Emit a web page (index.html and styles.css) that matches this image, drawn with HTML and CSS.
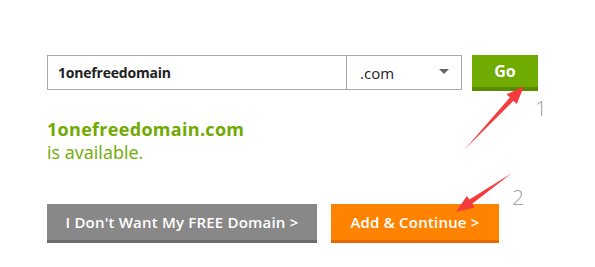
FILE: index.html
```html
<!DOCTYPE html>
<html>
<head>
<meta charset="utf-8">
<link rel="stylesheet" href="styles.css">
</head>
<body>
<div class="page">
  <div class="search-row">
    <div class="field">
      <div class="name-input">1onefreedomain</div>
      <div class="tld-select"><span>.com</span><span class="caret"></span></div>
    </div>
    <div class="go-btn">Go</div>
  </div>
  <div class="result">
    <div class="domain">1onefreedomain.com</div>
    <div class="status">is available.</div>
  </div>
  <div class="actions">
    <div class="btn btn-gray">I Don't Want My FREE Domain &gt;</div>
    <div class="btn btn-orange">Add &amp; Continue &gt;</div>
  </div>
  <svg class="annot" width="595" height="267" viewBox="0 0 595 267">
    <polygon points="465,149 513.5,100.8 516.8,103.9 524,86 506.6,94.3 509.9,97.4" fill="#f53b3b"/>
    <polygon points="512,173 472.2,203.8 474.8,207.4 456,212 466.8,196 469.4,199.6" fill="#f53b3b"/>
  </svg>
  <div class="num num1">1</div>
  <div class="num num2">2</div>
</div>
</body>
</html>
```
FILE: styles.css
```css
html, body { margin: 0; padding: 0; background: #fff; }
body { font-family: "Open Sans", "Noto Sans", sans-serif; width: 595px; height: 267px; overflow: hidden; }
.page { position: relative; padding: 55px 0 0 47px; height: 267px; box-sizing: border-box; }
.search-row { display: flex; gap: 10px; height: 36px; }
.field { display: flex; border: 1px solid #a9a9a9; width: 415px; box-sizing: border-box; height: 35px; }
.name-input { width: 299px; border-right: 1px solid #a9a9a9; box-sizing: border-box; padding-left: 10px; font-size: 14px; font-weight: 700; color: #222; line-height: 33px; letter-spacing: -0.2px; }
.tld-select { flex: 1; display: flex; align-items: center; justify-content: space-between; padding: 0 12px 0 13px; font-size: 15px; color: #222; }
.caret { width: 0; height: 0; border-left: 5px solid transparent; border-right: 5px solid transparent; border-top: 5px solid #666; margin-bottom: 2px; }
.go-btn { width: 66px; height: 36px; box-sizing: border-box; background: #6fab00; border-bottom: 4px solid #5a8b00; color: #fff; font-weight: 700; font-size: 16px; text-align: center; line-height: 32px; }
.result { padding-top: 27px; color: #6fab00; }
.domain { font-weight: 700; font-size: 18px; line-height: 22px; letter-spacing: 0.3px; }
.status { font-size: 18px; line-height: 24px; letter-spacing: 0; }
.actions { display: flex; gap: 14px; margin-top: 40px; }
.btn { height: 39px; box-sizing: border-box; color: #fff; font-size: 15px; font-weight: 600; line-height: 37px; text-align: center; letter-spacing: 0.2px; }
.btn-gray { width: 270px; background: #888888; border-bottom: 3px solid #6c6c6c; }
.btn-orange { width: 168px; background: #ff8300; border-bottom: 3px solid #e26a00; }
.annot { position: absolute; left: 0; top: 0; }
.num { position: absolute; color: #a0a0a0; font-family: "Open Sans", sans-serif; font-weight: 300; font-size: 21px; line-height: 21px; }
.num1 { left: 535px; top: 98px; }
.num2 { left: 512px; top: 187px; }
```
